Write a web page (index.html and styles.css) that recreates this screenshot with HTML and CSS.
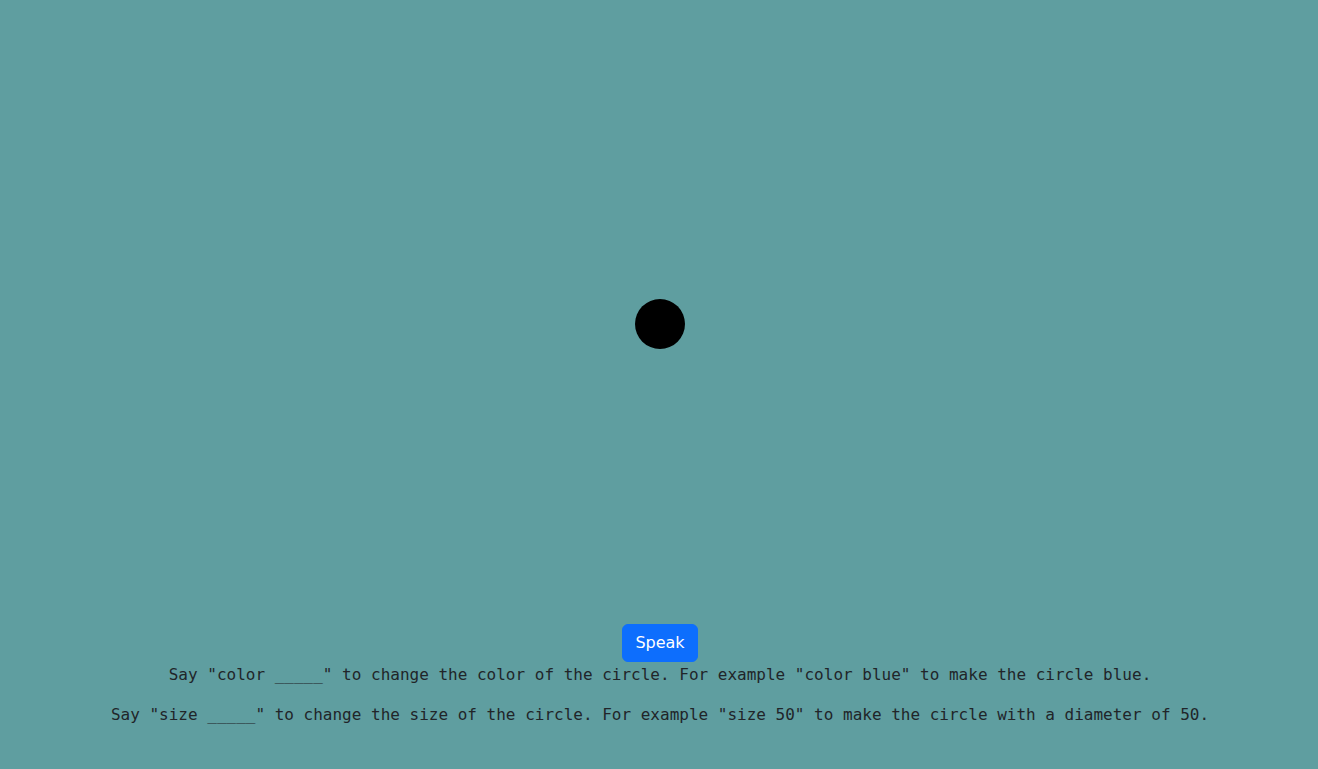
FILE: index.html
```html
<!DOCTYPE html>
<html>
<head>
<meta charset="utf-8">
<link rel="stylesheet" href="styles.css">
</head>
<body>
<div class="stage"><div class="circle"></div></div>
<div class="controls">
  <button class="btn">Speak</button>
  <p class="hint">Say "color _____" to change the color of the circle. For example "color blue" to make the circle blue.</p>
  <p class="hint">Say "size _____" to change the size of the circle. For example "size 50" to make the circle with a diameter of 50.</p>
</div>
</body>
</html>
```
FILE: styles.css
```css
html, body { margin: 0; padding: 0; }
body {
  background: #5f9ea0;
  color: #212529;
  font-family: "DejaVu Sans", sans-serif;
  font-size: 16px;
  line-height: 1.5;
  padding-top: 24px;
  height: 769px;
  box-sizing: border-box;
  overflow: hidden;
}
.stage {
  height: 600px;
  display: flex;
  align-items: center;
  justify-content: center;
}
.circle {
  width: 50px;
  height: 50px;
  border-radius: 50%;
  background: #000;
  margin-left: 2px;
}
.controls {
  display: flex;
  flex-direction: column;
  align-items: center;
}
.btn {
  font-family: "DejaVu Sans", sans-serif;
  font-size: 16px;
  line-height: 24px;
  padding: 6px 12px;
  border: 1px solid #0d6efd;
  background: #0d6efd;
  color: #fff;
  border-radius: 6px;
  margin-left: 2px;
  margin-bottom: 1px;
}
.hint {
  font-family: "DejaVu Sans Mono", monospace;
  margin: 0 0 16px 2px;
  text-align: center;
}
```
